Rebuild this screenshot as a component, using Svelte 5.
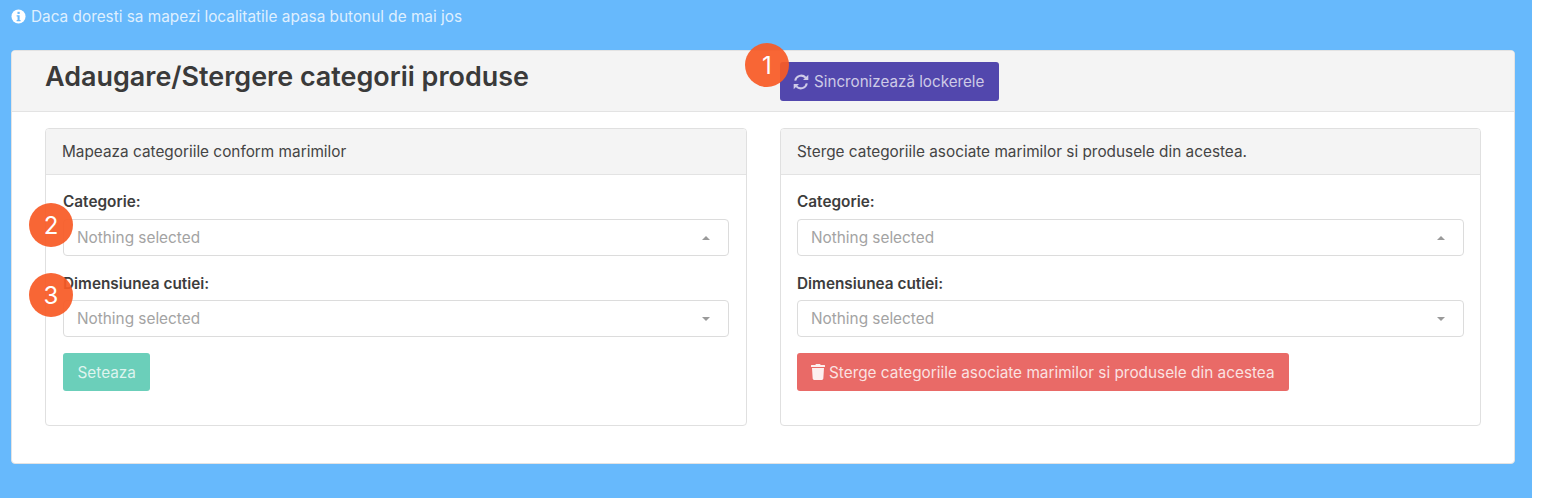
<script>
	const panels = [
		{
			title: 'Mapeaza categoriile conform marimilor',
			action: 'Seteaza',
			kind: 'success'
		},
		{
			title: 'Sterge categoriile asociate marimilor si produsele din acestea.',
			action: 'Sterge categoriile asociate marimilor si produsele din acestea',
			kind: 'danger'
		}
	];
</script>

<div class="page">
	<p class="notice">
		<svg class="info" viewBox="0 0 16 16" aria-hidden="true">
			<circle cx="8" cy="8" r="7.5" fill="#fff" />
			<rect x="6.9" y="3" width="2.4" height="2.3" fill="#67b9fc" />
			<path d="M6 6.6h3.2v5h1v1.4H6v-1.4h1v-3.6H6z" fill="#67b9fc" />
		</svg>
		Daca doresti sa mapezi localitatile apasa butonul de mai jos
	</p>

	<section class="card">
		<header class="card-head">
			<h2>Adaugare/Stergere categorii produse</h2>
			<div class="sync-wrap">
				<button class="btn sync">
					<svg class="ico-sync" viewBox="0 0 16 16" aria-hidden="true">
						<path d="M2.2 6.600A6 6 0 0 1 12.600 3.700" fill="none" stroke="currentColor" stroke-width="2" />
						<path d="M15.300 0.800v5.300h-5.300z" fill="currentColor" />
						<path d="M13.800 9.400A6 6 0 0 1 3.400 12.300" fill="none" stroke="currentColor" stroke-width="2" />
						<path d="M0.700 15.200v-5.300h5.300z" fill="currentColor" />
					</svg>
					Sincronizează lockerele
				</button>
				<span class="badge badge-1">1</span>
			</div>
		</header>

		<div class="card-body">
			{#each panels as panel, i}
				<div class="panel">
					<div class="panel-head">{panel.title}</div>
					<div class="panel-body">
						<div class="field first">
							<label for="cat{i}">Categorie:</label>
							<div class="select" id="cat{i}">
								<span>Nothing selected</span>
								<i class="caret up"></i>
							</div>
							{#if i === 0}<span class="badge badge-2">2</span>{/if}
						</div>
						<div class="field second">
							<label for="dim{i}">Dimensiunea cutiei:</label>
							<div class="select" id="dim{i}">
								<span>Nothing selected</span>
								<i class="caret"></i>
							</div>
							{#if i === 0}<span class="badge badge-3">3</span>{/if}
						</div>
						<button class="btn {panel.kind}">
							{#if panel.kind === 'danger'}
								<svg class="ico-trash" viewBox="0 0 448 512" aria-hidden="true">
									<path
										fill="currentColor"
										d="M432 32H312l-9.400-18.700A24 24 0 0 0 281.100 0H166.800a23.700 23.700 0 0 0-21.400 13.300L136 32H16A16 16 0 0 0 0 48v32a16 16 0 0 0 16 16h416a16 16 0 0 0 16-16V48a16 16 0 0 0-16-16zM53.200 467a48 48 0 0 0 47.900 45h245.800a48 48 0 0 0 47.900-45L416 128H32z"
									/>
								</svg>
							{/if}
							{panel.action}
						</button>
					</div>
				</div>
			{/each}
		</div>
	</section>
</div>

<style>
	:global(body) {
		background: #fff;
	}
	.page {
		width: 1532px;
		height: 498px;
		box-sizing: border-box;
		background: #67b9fc;
		padding: 8px 17px 0 11px;
		font-family: Inter, 'Liberation Sans', sans-serif;
		font-size: 15.35px;
		color: #3d3d3d;
		overflow: hidden;
	}
	.notice {
		margin: 0 0 25px;
		height: 17px;
		line-height: 17px;
		color: rgba(255, 255, 255, 0.8);
		display: flex;
		align-items: center;
		gap: 5px;
	}
	.info {
		width: 15px;
		height: 15px;
	}
	.card {
		background: #fff;
		border: 1px solid #e3e3e3;
		border-radius: 4px;
		height: 414px;
		box-sizing: border-box;
	}
	.card-head {
		height: 61px;
		box-sizing: border-box;
		background: #f4f4f4;
		border-bottom: 1px solid #e3e3e3;
		border-radius: 3px 3px 0 0;
		padding: 0 33px;
		display: grid;
		grid-template-columns: 702px auto;
		column-gap: 33px;
		align-items: start;
	}
	h2 {
		margin: 8px 0 0;
		font-size: 26.950px;
		line-height: 36px;
		font-weight: 600;
		color: #3a3a3a;
	}
	.sync-wrap {
		position: relative;
		margin-top: 11px;
		justify-self: start;
	}
	.btn {
		font: inherit;
		border: 1px solid transparent;
		border-radius: 3px;
		height: 38px;
		padding: 0 13.500px;
		display: inline-flex;
		align-items: center;
		gap: 4px;
		white-space: nowrap;
	}
	.sync {
		background: #5247ad;
		color: rgba(255, 255, 255, 0.72);
		font-size: 15.200px;
		padding: 0 14px 0 12px;
		gap: 5px;
		height: 39px;
	}
	.ico-sync {
		width: 16px;
		height: 16px;
	}
	.ico-trash {
		width: 14px;
		height: 16px;
		color: #fff;
		opacity: 0.9;
	}
	.card-body {
		padding: 16px 33px;
		display: grid;
		grid-template-columns: 702px 701px;
		column-gap: 33px;
	}
	.panel {
		height: 298px;
		box-sizing: border-box;
		border: 1px solid #e0e0e0;
		border-radius: 4px;
	}
	.panel-head {
		height: 46px;
		box-sizing: border-box;
		padding: 0 16px;
		background: #f4f4f4;
		border-bottom: 1px solid #e3e3e3;
		border-radius: 3px 3px 0 0;
		display: flex;
		align-items: center;
		color: #444;
	}
	.panel-body {
		padding: 18px 16px 0;
	}
	.panel:first-child .panel-body {
		padding: 18px 17px 0;
	}
	.field {
		position: relative;
	}
	.second {
		margin-top: 19px;
		margin-bottom: 16px;
	}
	label {
		display: block;
		font-weight: 600;
		line-height: 17px;
		margin-bottom: 8px;
	}
	.first label {
		margin-bottom: 9px;
	}
	.select {
		height: 37px;
		box-sizing: border-box;
		border: 1px solid #dcdcdc;
		border-radius: 4px;
		padding: 0 18px 0 13px;
		display: flex;
		align-items: center;
		justify-content: space-between;
		color: #a3a3a3;
		background: #fff;
	}
	.caret {
		width: 0;
		height: 0;
		border-left: 4px solid transparent;
		border-right: 4px solid transparent;
		border-top: 4px solid #9a9a9a;
	}
	.caret.up {
		border-top: 0;
		border-bottom: 4px solid #9a9a9a;
	}
	.success {
		background: #6bcfba;
		color: rgba(255, 255, 255, 0.78);
	}
	.danger {
		background: #e96a67;
		color: rgba(255, 255, 255, 0.82);
		padding: 0 13px;
	}
	.badge {
		position: absolute;
		width: 44px;
		height: 44px;
		border-radius: 50%;
		background: rgba(247, 90, 38, 0.93);
		color: #fff;
		font-size: 24px;
		font-family: Inter, sans-serif;
		display: flex;
		align-items: center;
		justify-content: center;
	}
	.badge-1 {
		left: -35px;
		top: -19px;
	}
	.badge-2 {
		left: -34px;
		top: 10px;
	}
	.badge-3 {
		left: -34px;
		top: -2px;
	}
</style>
